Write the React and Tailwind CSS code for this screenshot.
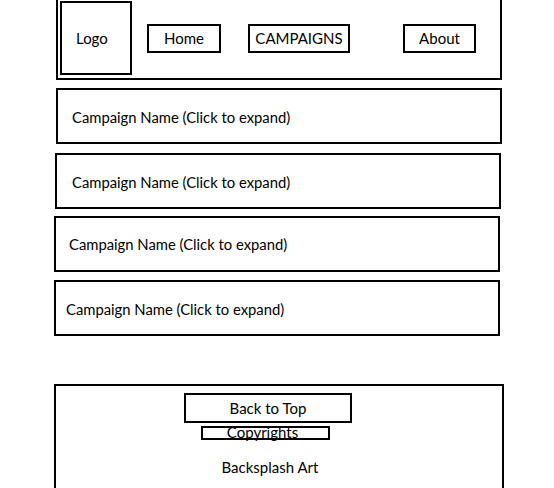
const font = "font-['Lato','Open_Sans',sans-serif]";

function NavButton({ label, className = "" }) {
  return (
    <div
      className={`mt-[24px] h-[29px] border-2 border-black flex items-center justify-center text-[15px] leading-none text-black ${className}`}
    >
      {label}
    </div>
  );
}

function CampaignRow({ className = "", textClass = "" }) {
  return (
    <div
      className={`h-[56px] w-[446px] border-2 border-black flex items-center text-[14.8px] text-black ${className}`}
    >
      <span className={textClass}>Campaign Name (Click to expand)</span>
    </div>
  );
}

export default function App() {
  return (
    <div className={`w-[554px] h-[488px] overflow-hidden bg-white ${font}`}>
      {/* Header */}
      <div className="ml-[56px] w-[446px] h-[80px] border-2 border-t-0 border-black flex items-start">
        <div className="ml-[2px] mt-[1px] w-[72px] h-[74px] border-2 border-black flex items-center pl-[14px] text-[15px]">
          Logo
        </div>
        <NavButton label="Home" className="ml-[15px] w-[74px]" />
        <NavButton label="CAMPAIGNS" className="ml-[27px] w-[102px]" />
        <NavButton label="About" className="ml-[53px] w-[73px]" />
      </div>

      {/* Campaign list */}
      <CampaignRow className="ml-[56px] mt-[8px]" textClass="pl-[14px] pt-[2px]" />
      <CampaignRow className="ml-[55px] mt-[9px]" textClass="pl-[15px] pt-[2px]" />
      <CampaignRow className="ml-[54px] mt-[7px]" textClass="pl-[13px] pt-[0px]" />
      <CampaignRow className="ml-[54px] mt-[8px]" textClass="pl-[10px] pt-[2px]" />

      {/* Footer */}
      <div className="ml-[54px] mt-[48px] w-[450px] h-[110px] border-2 border-b-0 border-black flex flex-col text-[15px]">
        <div className="ml-[128px] mt-[7px] w-[168px] h-[30px] border-2 border-black flex items-center justify-center">
          Back to Top
        </div>
        <div className="ml-[145px] mt-[3px] w-[129px] h-[14px] border-2 border-black flex items-center justify-center leading-none overflow-visible">
          <span className="-mt-[2px] -ml-[6px]">Copyrights</span>
        </div>
        <div className="mt-[16px] ml-[158px] w-[112px] text-center">Backsplash Art</div>
      </div>
    </div>
  );
}
